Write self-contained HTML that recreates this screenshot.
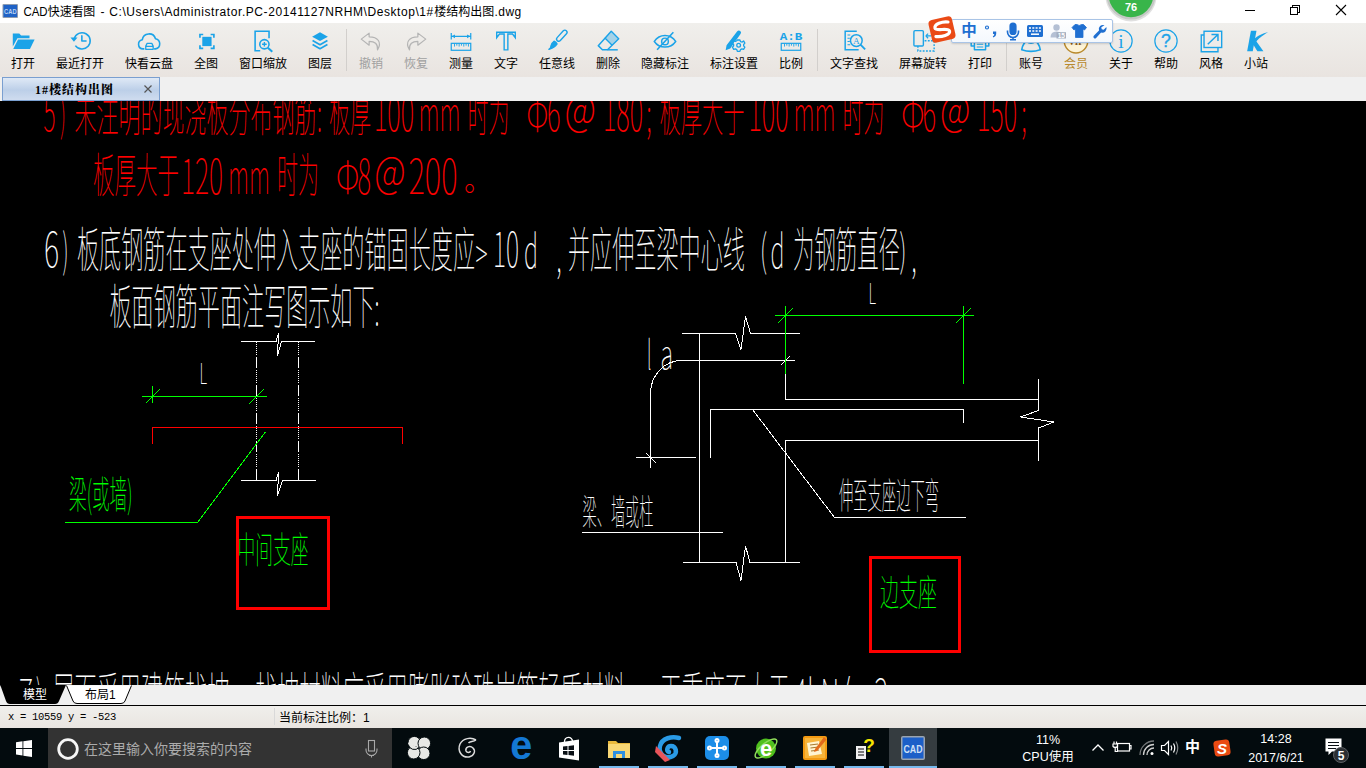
<!DOCTYPE html>
<html lang="zh-CN">
<head>
<meta charset="utf-8">
<title>CAD快速看图</title>
<style>
*{box-sizing:border-box;margin:0;padding:0}
html,body{width:1366px;height:768px;overflow:hidden;background:#000}
body{position:relative;font-family:"Liberation Sans","Noto Sans CJK SC",sans-serif;font-size:12px;color:#000}
.abs{position:absolute}
#titlebar{left:0;top:0;width:1366px;height:23px;background:#fff}
#title text{font-family:"Liberation Sans","Noto Sans CJK SC",sans-serif}
#toolbar{left:0;top:23px;width:1366px;height:54px;background:linear-gradient(#f0efec,#e9e4e0)}
.tb{position:absolute;top:0;height:53px;width:80px;margin-left:-40px;text-align:center}
.tb svg{position:absolute;left:27px;top:5px;width:26px;height:26px;overflow:visible}
.tb span{position:absolute;left:0;right:0;top:33px;font-size:12px;line-height:16px;white-space:nowrap;color:#000}
.tb.dis span{color:#a0a0a0}
.tb.vip span{color:#b8892c}
.sep{position:absolute;top:6px;width:1px;height:42px;background:#d2cfcc}
#tabstrip{left:0;top:77px;width:1366px;height:24px;background:#f0f0f0}
#tab{left:2px;top:0;width:158px;height:24px;border:1px solid #7a9fd0;background:linear-gradient(#dfe9f6,#bccfe8 55%,#cfdcef)}
#tab b{position:absolute;left:32px;top:4px;font-family:"Liberation Serif","Noto Serif CJK SC",serif;font-weight:900;font-size:12px;line-height:16px;white-space:nowrap;letter-spacing:1px}
#canvas{left:0;top:101px;width:1366px;height:584px;background:#000;overflow:hidden}
.c{font-family:"Noto Sans CJK SC",sans-serif;font-weight:100}
#layout{left:0;top:685px;width:1366px;height:21px;background:#f0f0f0;border-bottom:1px solid #000}
#status{left:0;top:706px;width:1366px;height:22px;background:linear-gradient(#f0efec,#e9e5e1)}
#taskbar{left:0;top:728px;width:1366px;height:40px;background:#030b0e}
.ul{top:38px;height:2px;background:#76b9ed}
.tt{color:#fff;font-size:12.500px;line-height:16px;text-align:center;white-space:nowrap}
</style>
</head>
<body>
<div id="titlebar" class="abs">
<svg class="abs" style="left:2px;top:4px" width="16" height="14" viewBox="0 0 16 14"><rect x=".5" y="0" width="15.500" height="14" rx="1" fill="#8e9cb0"/><rect x="1.500" y="1" width="13.500" height="12" fill="#1f62c6"/><text x="8.300" y="10.200" text-anchor="middle" font-family="Liberation Sans,sans-serif" font-weight="bold" font-size="8" fill="#b9d2f2" textLength="12.500" lengthAdjust="spacingAndGlyphs">CAD</text></svg>
<svg id="title" class="abs" style="left:0;top:0" width="540" height="23" viewBox="0 0 540 23" font-size="12" fill="#000"><text x="23.400" y="16" textLength="24.200" lengthAdjust="spacingAndGlyphs">CAD</text><text x="47.800" y="16" textLength="47.500">快速看图</text><text x="100.600" y="16">-</text><text x="109.300" y="16" textLength="324" lengthAdjust="spacing">C:\Users\Administrator.PC-20141127NRHM\Desktop\1#</text><text x="434.200" y="16" textLength="60">楼结构出图</text><text x="494.500" y="16" textLength="26.800" lengthAdjust="spacing">.dwg</text></svg>
<svg class="abs" style="left:1230px;top:0" width="136" height="23" viewBox="1230 0 136 23" fill="none" stroke="#000" stroke-width="1" shape-rendering="crispEdges"><path d="M1245 10.500H1255"/><path d="M1290.500 7.500H1297.500V14.500H1290.500zM1292.500 7.500V5.500H1299.500V12.500H1297.500"/><path d="M1336 5L1346 15M1346 5L1336 15" shape-rendering="auto" stroke-width="1.100"/></svg>
</div>
<div id="toolbar" class="abs">
<div class="tb " style="left:23px"><svg viewBox="0 0 28 28"><path d="M3 6h7l2 2h9v3H8l-5 9z" fill="#1ba3e8"/><path d="M8.600 12.500H26.500L21.500 22.500H3.500z" fill="#1ba3e8"/></svg><span>打开</span></div>
<div class="tb " style="left:80px"><svg viewBox="0 0 28 28"><g transform="translate(1.500 -1)"><g fill="none" stroke="#1ba3e8" stroke-width="1.7"><path d="M6.200 12.500A8.800 8.800 0 1 1 7.500 20"/><path d="M14.500 9.500V15H19" stroke-linecap="round" stroke-linejoin="round"/></g><path d="M2.200 11.200L9.800 11.200L6 15.800z" fill="#1ba3e8"/></g></svg><span>最近打开</span></div>
<div class="tb " style="left:149px"><svg viewBox="0 0 28 28"><g fill="none" stroke="#1ba3e8" stroke-width="1.7" stroke-linejoin="round"><path d="M9 22.500H7.500A5 5 0 0 1 6.800 12.600A7.300 7.300 0 0 1 21 11.500A5.600 5.600 0 0 1 21 22.500H19.500"/><path d="M10.500 23V19.500L12 16.500H17L18.500 19.500V23zM10.500 19.800H18.500" stroke-width="1.4"/></g></svg><span>快看云盘</span></div>
<div class="tb " style="left:206px"><svg viewBox="0 0 28 28"><g transform="translate(1 0.500)"><rect x="9" y="9" width="10" height="10" fill="#1ba3e8"/><g fill="none" stroke="#1ba3e8" stroke-width="1.800"><path d="M6.500 10V6.500H10M18 6.500H21.500V10M21.500 18V21.500H18M10 21.500H6.500V18"/></g></g></svg><span>全图</span></div>
<div class="tb " style="left:263px"><svg viewBox="0 0 28 28"><g fill="none" stroke="#1ba3e8" stroke-width="1.7"><path d="M20.500 11V3.500H5.500V24.500H11"/><circle cx="15.500" cy="17.500" r="5"/><path d="M19.200 21.200L24 25.500" stroke-width="2.200"/><path d="M13 17.500H18M15.500 15V20" stroke-width="1.500"/></g></svg><span>窗口缩放</span></div>
<div class="tb " style="left:320px"><svg viewBox="0 0 28 28"><path d="M14 4.500L22.500 9.300L14 14L5.500 9.300z" fill="#1ba3e8"/><g fill="none" stroke="#1ba3e8" stroke-width="1.800" stroke-linejoin="round"><path d="M6 13.500L14 18L22 13.500"/><path d="M6 17.800L14 22.300L22 17.800"/></g></svg><span>图层</span></div>
<div class="tb dis" style="left:371px"><svg viewBox="0 0 28 28"><path d="M12 5.500L3.500 12L12 18.500V14.500C18 14.500 21.500 16.500 21 23.500C26 15.500 21.500 9.500 12 9.500z" fill="none" stroke="#b4b4b4" stroke-width="1.300" stroke-linejoin="round"/></svg><span>撤销</span></div>
<div class="tb dis" style="left:416px"><svg viewBox="0 0 28 28"><path d="M16 5.500L24.500 12L16 18.500V14.500C10 14.500 6.500 16.500 7 23.500C2 15.500 6.500 9.500 16 9.500z" fill="none" stroke="#b4b4b4" stroke-width="1.300" stroke-linejoin="round"/></svg><span>恢复</span></div>
<div class="tb " style="left:461px"><svg viewBox="0 0 28 28"><g fill="none" stroke="#1ba3e8" stroke-width="1.300"><path d="M3.500 5.500V12.500M24.500 5.500V12.500M4 9H24"/><rect x="3.500" y="16.500" width="21" height="7.500"/><path d="M7 17V20M9.500 17V19M12 17V20M14.500 17V19M17 17V20M19.500 17V19M22 17V20" stroke-width="1"/></g><path d="M4 9L7.500 7V11zM24 9L20.500 7V11z" fill="#1ba3e8"/></svg><span>测量</span></div>
<div class="tb " style="left:506px"><svg viewBox="0 0 28 28"><path d="M4 4.500H24V10.500L21 6.500H16V23.500H12V6.500H7L4 10.500z" fill="none" stroke="#1ba3e8" stroke-width="1.500" stroke-linejoin="miter"/></svg><span>文字</span></div>
<div class="tb " style="left:557px"><svg viewBox="0 0 28 28"><g transform="rotate(42 14 14)" fill="none" stroke="#1ba3e8" stroke-width="1.500" stroke-linejoin="round"><rect x="11.700" y="-1" width="4.600" height="14.500" rx="2.300"/><path d="M11.800 16.300Q14 15.300 16.200 16.300Q17 21.500 13.600 26.500Q14.300 23.500 12.800 22.500Q11 20 11.800 16.300z" fill="#1ba3e8"/></g></svg><span>任意线</span></div>
<div class="tb " style="left:608px"><svg viewBox="0 0 28 28"><g fill="none" stroke="#1ba3e8" stroke-width="1.600" stroke-linejoin="round"><path d="M17.500 3.500L25.500 11.500L13.500 23.500H8L3.500 19z"/><path d="M10.500 10.500L18.500 18.500"/><path d="M13.500 23.500H24.500"/></g><path d="M17.500 4.500L24.500 11.500L18.500 17.500L11.500 10.500z" fill="#1ba3e8" opacity=".35"/></svg><span>删除</span></div>
<div class="tb " style="left:665px"><svg viewBox="0 0 28 28"><g fill="none" stroke="#1ba3e8" stroke-width="1.600"><path d="M2.500 14.500C8 6 20 6 25.500 14.500C20 22.500 8 22.500 2.500 14.500z"/><circle cx="14" cy="14.500" r="3.600"/><path d="M5.500 23.500L23 4.500" stroke-width="1.700"/></g></svg><span>隐藏标注</span></div>
<div class="tb " style="left:734px"><svg viewBox="0 0 28 28"><path d="M17.500 3.500a2.300 2.300 0 0 1 3.500 3L10 22L5 24L6 18.500z" fill="#1ba3e8"/><circle cx="19" cy="18.500" r="5.800" fill="#eeebe9"/><g fill="none" stroke="#1ba3e8" stroke-width="1.400"><circle cx="19" cy="18.500" r="2"/><path d="M17.600 12.900H20.400L21 14.700L22.900 15.100L24.300 13.900L25.700 16.300L24.400 17.700V19.300L25.700 20.700L24.300 23.100L22.500 22.500L21 23.300L20.400 25.100H17.600L17 23.300L15.500 22.500L13.700 23.100L12.300 20.700L13.600 19.300V17.700L12.300 16.300L13.700 13.900L15.500 14.500L17 13.700z" stroke-linejoin="round"/></g></svg><span>标注设置</span></div>
<div class="tb " style="left:791px"><svg viewBox="0 0 28 28"><g fill="none" stroke="#1ba3e8" stroke-width="1.300"><rect x="3.500" y="16.500" width="21" height="7.500"/><path d="M7 17V20M9.500 17V19M12 17V20M14.500 17V19M17 17V20M19.500 17V19M22 17V20" stroke-width="1"/></g><text x="14" y="12.500" text-anchor="middle" font-family="Liberation Mono,monospace" font-weight="bold" font-size="11.500" fill="#1ba3e8" textLength="24.500" lengthAdjust="spacingAndGlyphs">A:B</text></svg><span>比例</span></div>
<div class="tb " style="left:854px"><svg viewBox="0 0 28 28"><g fill="none" stroke="#1ba3e8" stroke-width="1.600"><path d="M17 3.500H4.500V23.500H19"/><path d="M7 7.500H10M7 11H9.500M7 14.500H9.500M7 18H10" stroke-width="1.100"/><circle cx="16.500" cy="13.500" r="6.300"/><path d="M21 18L26 23" stroke-width="2"/></g><text x="16.500" y="17" text-anchor="middle" font-family="Liberation Serif,serif" font-size="10" fill="#1ba3e8">A</text></svg><span>文字查找</span></div>
<div class="tb " style="left:923px"><svg viewBox="0 0 28 28"><g fill="none" stroke="#1ba3e8" stroke-width="1.500"><rect x="4.200" y="2.800" width="10.200" height="16.600" rx="1.200"/><path d="M8.500 19.400V24.700H26V13.800H14.400" stroke-dasharray="2 1.500"/><path d="M17 8.500H23M17 8.500L19.500 6M17 8.500L19.500 11" stroke-width="1.300"/></g></svg><span>屏幕旋转</span></div>
<div class="tb " style="left:980px"><svg viewBox="0 0 28 28"><g fill="none" stroke="#1ba3e8" stroke-width="1.600" stroke-linejoin="round"><path d="M8 9V3.500H20V9"/><path d="M8 19.500H4.500V9H23.500V19.500H20"/><rect x="8" y="14.500" width="12" height="9"/><path d="M10.500 17.500H17.500M10.500 20.500H17.500" stroke-width="1.200"/></g></svg><span>打印</span></div>
<div class="tb " style="left:1031px"><svg viewBox="0 0 28 28"><g fill="none" stroke="#1ba3e8" stroke-width="1.800"><circle cx="14" cy="8" r="5"/><path d="M4 23.500C5 17 8 14.500 9.500 14.500C12 17 16 17 18.500 14.500C20 14.500 23 17 24 23.500C18 25.500 10 25.500 4 23.500z" stroke-linejoin="round"/></g></svg><span>账号</span></div>
<div class="tb vip" style="left:1076px"><svg viewBox="0 0 28 28"><circle cx="14" cy="14.300" r="12.600" fill="#fdf3d6" stroke="#b8892c" stroke-width="1.500"/><text x="14" y="18" text-anchor="middle" font-family="Liberation Serif,serif" font-weight="bold" font-size="9.500" fill="#8a5a14">VIP</text></svg><span>会员</span></div>
<div class="tb " style="left:1121px"><svg viewBox="0 0 28 28"><circle cx="14" cy="14" r="12" fill="none" stroke="#1ba3e8" stroke-width="1.300"/><text x="14" y="21" text-anchor="middle" font-family="Liberation Serif,serif" font-size="21" fill="#1ba3e8">i</text></svg><span>关于</span></div>
<div class="tb " style="left:1166px"><svg viewBox="0 0 28 28"><circle cx="14" cy="14" r="12" fill="none" stroke="#1ba3e8" stroke-width="1.300"/><text x="14" y="20.500" text-anchor="middle" font-family="Liberation Sans,sans-serif" font-size="19" fill="#1ba3e8" stroke="#1ba3e8" stroke-width=".4">?</text></svg><span>帮助</span></div>
<div class="tb " style="left:1211px"><svg viewBox="0 0 28 28"><g fill="none" stroke="#1ba3e8" stroke-width="1.500"><path d="M21.500 20V25.500H3.500V7.500H9"/><rect x="6.500" y="3.500" width="19" height="17.500" fill="#eeebe9"/><path d="M10.500 17.500L21.500 7M14.500 7H21.500V14" stroke-width="1.600"/></g></svg><span>风格</span></div>
<div class="tb " style="left:1256px"><svg viewBox="0 0 28 28"><path d="M8.500 3H14.500L10.500 25H4.500z" fill="#1ba3e8"/><path d="M9 15C14 9 20 6 27 4.500C20 8.500 16 12 14.500 14.500L22 25H15.500L10.500 17z" fill="#1ba3e8"/></svg><span>小站</span></div>
<div class="sep" style="left:346px"></div>
<div class="sep" style="left:817px"></div>
<div class="sep" style="left:1006px"></div>
</div>
<div id="tabstrip" class="abs"><div id="tab" class="abs"><b>1#楼结构出图</b><svg class="abs" style="left:139px;top:5px" width="12" height="12" viewBox="0 0 12 12"><path d="M2.500 2.500L9.500 9.500M9.500 2.500L2.500 9.500" stroke="#555" stroke-width="1.200" fill="none"/></svg></div></div>
<div id="canvas" class="abs">
<svg class="abs" style="left:0;top:0" width="1366" height="584" viewBox="0 101 1366 584" shape-rendering="crispEdges">
<g class="c" fill="#f00" stroke="#f00" stroke-width="0.12">
<text x="43.5" y="131.300" font-size="48" textLength="12" lengthAdjust="spacingAndGlyphs">5</text>
<text x="60" y="131" font-size="46" textLength="6" lengthAdjust="spacingAndGlyphs">)</text>
<text x="74.5" y="130.500" font-size="47" textLength="242" lengthAdjust="spacingAndGlyphs">未注明的现浇板分布钢筋</text>
<text x="317" y="130.500" font-size="47" textLength="5" lengthAdjust="spacingAndGlyphs">:</text>
<text x="329" y="130.500" font-size="47" textLength="42" lengthAdjust="spacingAndGlyphs">板厚</text>
<text x="374" y="131.300" font-size="48" textLength="40" lengthAdjust="spacingAndGlyphs">100</text>
<text x="418.5" y="131.300" font-size="48" textLength="42" lengthAdjust="spacingAndGlyphs">mm</text>
<text x="467.5" y="130.500" font-size="47" textLength="42" lengthAdjust="spacingAndGlyphs">时为</text>
<text x="526.400" y="131" font-size="44" textLength="21.700" lengthAdjust="spacingAndGlyphs">Φ</text>
<text x="547" y="131.300" font-size="48" textLength="13.5" lengthAdjust="spacingAndGlyphs">6</text>
<text x="564.500" y="125.800" font-size="45" textLength="31.400" lengthAdjust="spacingAndGlyphs">@</text>
<text x="603" y="131.300" font-size="48" textLength="40" lengthAdjust="spacingAndGlyphs">180</text>
<text x="646.5" y="131.300" font-size="48" textLength="5" lengthAdjust="spacingAndGlyphs">;</text>
<text x="659.5" y="130.500" font-size="47" textLength="85" lengthAdjust="spacingAndGlyphs">板厚大于</text>
<text x="748.5" y="131.300" font-size="48" textLength="40" lengthAdjust="spacingAndGlyphs">100</text>
<text x="793.5" y="131.300" font-size="48" textLength="42" lengthAdjust="spacingAndGlyphs">mm</text>
<text x="842.5" y="130.500" font-size="47" textLength="42" lengthAdjust="spacingAndGlyphs">时为</text>
<text x="901.200" y="131" font-size="44" textLength="23.200" lengthAdjust="spacingAndGlyphs">Φ</text>
<text x="922.5" y="131.300" font-size="48" textLength="13.5" lengthAdjust="spacingAndGlyphs">6</text>
<text x="939.900" y="125.800" font-size="45" textLength="30.300" lengthAdjust="spacingAndGlyphs">@</text>
<text x="977" y="131.300" font-size="48" textLength="40" lengthAdjust="spacingAndGlyphs">150</text>
<text x="1021.5" y="131.300" font-size="48" textLength="5" lengthAdjust="spacingAndGlyphs">;</text>
<text x="93" y="192.300" font-size="47" textLength="86" lengthAdjust="spacingAndGlyphs">板厚大于</text>
<text x="181" y="193.5" font-size="48" textLength="42" lengthAdjust="spacingAndGlyphs">120</text>
<text x="228" y="193.5" font-size="48" textLength="42" lengthAdjust="spacingAndGlyphs">mm</text>
<text x="277" y="192.300" font-size="47" textLength="42" lengthAdjust="spacingAndGlyphs">时为</text>
<text x="335.900" y="193" font-size="44" textLength="23.200" lengthAdjust="spacingAndGlyphs">Φ</text>
<text x="357.5" y="193.5" font-size="48" textLength="13.5" lengthAdjust="spacingAndGlyphs">8</text>
<text x="374.200" y="188" font-size="45" textLength="31.400" lengthAdjust="spacingAndGlyphs">@</text>
<text x="408.5" y="193.5" font-size="48" textLength="49" lengthAdjust="spacingAndGlyphs">200</text>
<text x="464.100" y="191.400" font-size="31" textLength="28.500" lengthAdjust="spacingAndGlyphs">。</text>
</g>
<g class="c" fill="#fff" stroke="#fff" stroke-width="0.08">
<text x="44" y="267" font-size="48" textLength="15" lengthAdjust="spacingAndGlyphs">6</text>
<text x="62.5" y="267" font-size="46" textLength="6" lengthAdjust="spacingAndGlyphs">)</text>
<text x="77" y="266.600" font-size="48" textLength="398" lengthAdjust="spacingAndGlyphs">板底钢筋在支座处伸入支座的锚固长度应</text>
<text x="475.5" y="268.5" font-size="40" textLength="12" lengthAdjust="spacingAndGlyphs">&gt;</text>
<text x="493" y="267" font-size="48" textLength="26" lengthAdjust="spacingAndGlyphs">10</text>
<text x="524" y="267.5" font-size="46" textLength="14" lengthAdjust="spacingAndGlyphs">d</text>
<text x="556.5" y="270.5" font-size="46" textLength="5" lengthAdjust="spacingAndGlyphs">,</text>
<text x="568" y="266.600" font-size="48" textLength="177" lengthAdjust="spacingAndGlyphs">并应伸至梁中心线</text>
<text x="760" y="266" font-size="44" textLength="7" lengthAdjust="spacingAndGlyphs">(</text>
<text x="770.5" y="267.5" font-size="46" textLength="14" lengthAdjust="spacingAndGlyphs">d</text>
<text x="793" y="266.600" font-size="48" textLength="107" lengthAdjust="spacingAndGlyphs">为钢筋直径</text>
<text x="899.5" y="266" font-size="44" textLength="7" lengthAdjust="spacingAndGlyphs">)</text>
<text x="911.5" y="270.5" font-size="46" textLength="5" lengthAdjust="spacingAndGlyphs">,</text>
<text x="109.500" y="323.500" font-size="48" textLength="265" lengthAdjust="spacingAndGlyphs">板面钢筋平面注写图示如下</text>
<text x="374.500" y="324.500" font-size="46" textLength="5" lengthAdjust="spacingAndGlyphs">:</text>
<text x="199.5" y="384" font-size="29" textLength="7.5" lengthAdjust="spacingAndGlyphs">L</text>
<text x="868.5" y="304" font-size="29" textLength="7.5" lengthAdjust="spacingAndGlyphs">L</text>
<text x="647" y="368.500" font-size="40" textLength="4.500" lengthAdjust="spacingAndGlyphs">l</text>
<text x="660.500" y="368.500" font-size="40" textLength="12.500" lengthAdjust="spacingAndGlyphs">a</text>
<text x="582.5" y="525" font-size="35" textLength="71" lengthAdjust="spacingAndGlyphs">梁、墙或柱</text>
<text x="839" y="508.500" font-size="36.500" textLength="100" lengthAdjust="spacingAndGlyphs">伸至支座边下弯</text>
<text x="19" y="713.500" font-size="48" textLength="14" lengthAdjust="spacingAndGlyphs">7</text>
<text x="36" y="713" font-size="46" textLength="6" lengthAdjust="spacingAndGlyphs">)</text>
<text x="52.5" y="712.100" font-size="48" textLength="177" lengthAdjust="spacingAndGlyphs">屋面采用建筑找坡</text>
<text x="230" y="716" font-size="46" textLength="5" lengthAdjust="spacingAndGlyphs">,</text>
<text x="255.500" y="712.100" font-size="48" textLength="370" lengthAdjust="spacingAndGlyphs">找坡材料应采用膨胀珍珠岩等轻质材料</text>
<text x="630" y="716" font-size="46" textLength="5" lengthAdjust="spacingAndGlyphs">,</text>
<text x="660" y="712.100" font-size="48" textLength="130" lengthAdjust="spacingAndGlyphs">干重度不大于</text>
<text x="793" y="713.500" font-size="48" textLength="95" lengthAdjust="spacingAndGlyphs">4kN/m3</text>
</g>
<g class="c" fill="#0f0" stroke="#0f0" stroke-width="0.12">
<text x="69" y="508" font-size="37.500" textLength="63.500" lengthAdjust="spacingAndGlyphs">梁(或墙)</text>
<text x="237.500" y="562.800" font-size="36" textLength="71" lengthAdjust="spacingAndGlyphs">中间支座</text>
<text x="880" y="606.300" font-size="36" textLength="57" lengthAdjust="spacingAndGlyphs">边支座</text>
</g>
<g fill="none" stroke="#fff" stroke-width="1">
<path d="M240.5 341.5H276L278.5 333.5L277.5 355.5L281.5 341.5H315"/>
<path d="M240.5 480.5H276L278.5 472.5L277.5 495.5L282.5 480.5H316"/>
<path d="M256.5 341.5V480.5M298.5 341.5V480.5" stroke-dasharray="1 1 1 1 1 1 1 1 1 1 1 1 1 2 11 2"/>
<path d="M682 333.5H735.5L741 349.5L745.5 316.5L750.5 333.5H800"/>
<path d="M682.5 562.5H736L741 580.5L745.5 546L750 562.5H800"/>
<path d="M699.5 333.5V562.5"/>
<path d="M795 360.5H681.5A31 33 0 0 0 650.5 393.5V467.5"/>
<path d="M635.5 457.5H696M646 453L656 463"/>
<path d="M781 365L790 356"/>
<path d="M785.5 373.5V399.5H1038.5"/>
<path d="M710.5 457.5V409.5H963.5V423"/>
<path d="M785.5 562.5V440.5H1038.5"/>
<path d="M1038.5 379V410.5L1020.5 417L1054 422L1038.5 428V460.5"/>
<path d="M752.5 409.5L834.5 517.5H966"/>
<path d="M581.5 532.5H722.5"/>
</g>
<g fill="none" stroke="#0f0" stroke-width="1">
<path d="M142 396.500H267M152.500 386V403M146 403L160 389M249 404L264 389"/>
<path d="M265.500 432L197.500 522.500H65"/>
<path d="M775 315.500H974M785.500 306V373.500M963.500 305.500V383.500M778 323L793 308M956 323L970.500 308.500"/>
</g>
<path d="M152.500 443.500V427.500H402.500V443.500" fill="none" stroke="#f00" stroke-width="1"/>
<rect x="237.500" y="517.500" width="91" height="91" fill="none" stroke="#f00" stroke-width="3"/>
<rect x="870.500" y="557.500" width="88.500" height="94" fill="none" stroke="#f00" stroke-width="3"/>
</svg>
</div>
<div id="layout" class="abs">
<svg class="abs" style="left:0;top:0" width="140" height="20" viewBox="0 0 140 20"><path d="M0 0H66L59 16Q58 19 55 19H10Q7 19 6 16L1 2z" fill="#000"/><path d="M66.500 0.500L73 16Q74 18.500 77 18.500H121Q124 18.500 125 16L131.500 0.500" fill="#fff" stroke="#000" stroke-width="1"/></svg>
<span class="abs" style="left:23px;top:2px;color:#fff;font-size:12px;line-height:16px">模型</span>
<span class="abs" style="left:85px;top:2px;color:#000;font-size:12px;line-height:16px">布局1</span>
</div>
<div id="status" class="abs">
<span class="abs" style="left:8px;top:4px;font-family:'Liberation Mono',monospace;font-size:10.500px;line-height:14px;white-space:pre;letter-spacing:-0.300px">x = 10559 y = -523</span>
<div class="abs" style="left:274px;top:2px;width:1px;height:17px;background:#d9d9d9"></div>
<span class="abs" style="left:279px;top:4px;font-size:12px;line-height:16px;white-space:pre">当前标注比例：1</span>
</div>
<div id="taskbar" class="abs">

<svg class="abs" style="left:16px;top:12px" width="16" height="17" viewBox="0 0 17 17" preserveAspectRatio="none"><path d="M0 2.300L6.900 1.300V8H0zM7.800 1.200L17 0V8H7.800zM0 8.900H6.900V15.600L0 14.600zM7.800 8.900H17V17L7.800 15.700z" fill="#fff"/></svg>
<div class="abs" style="left:48px;top:0;width:344px;height:40px;background:#333"></div>
<svg class="abs" style="left:56px;top:9px" width="24" height="24" viewBox="0 0 24 24"><circle cx="12" cy="12" r="9.300" fill="none" stroke="#f6f6f6" stroke-width="2.800"/></svg>
<span class="abs" style="left:84px;top:12px;font-size:14px;line-height:18px;color:#ababab;white-space:nowrap">在这里输入你要搜索的内容</span>
<svg class="abs" style="left:363px;top:10px" width="17" height="22" viewBox="0 0 17 22" fill="none" stroke="#a8a8a8" stroke-width="1.100"><rect x="5.500" y="2.500" width="6" height="10.500"/><path d="M3 10.500V12A5.500 5.500 0 0 0 14 12V10.500M8.500 17.500V19.500M6 17.500H11"/></svg>
<!-- pinned icons -->
<svg class="abs" style="left:404px;top:5px" width="30" height="30" viewBox="0 0 30 30"><g fill="#e8e9e6" stroke="#030b0e" stroke-width="1"><circle cx="10.300" cy="9.700" r="6.300"/><circle cx="20.300" cy="10.300" r="6.300"/><circle cx="19.700" cy="20.300" r="6.300"/><circle cx="9.700" cy="19.700" r="6.300"/><path d="M4 9.700A6.300 6.300 0 0 0 16.600 9.700L15 15z" stroke="none"/><path d="M4.200 11.500A6.300 6.300 0 0 0 15 14.500" fill="none"/></g></svg>
<svg class="abs" style="left:453px;top:5px" width="30" height="30" viewBox="0 0 30 30" fill="none" stroke="#dcdcdc" stroke-width="1.500"><path d="M23 7C18 4 10 5 7 11C4 18 9 25 16 24C21 23 23 18 20 15C17 12 12 14 13 18C14 20 17 20 17.500 18"/><path d="M23 7C20 9 17 8 15.500 10"/></svg>
<svg class="abs" style="left:506px;top:5px" width="30" height="30" viewBox="0 0 30 30"><text x="15.300" y="26" text-anchor="middle" font-family="Liberation Sans,sans-serif" font-weight="bold" font-size="40" fill="#1478d4" textLength="22" lengthAdjust="spacingAndGlyphs">e</text></svg>
<svg class="abs" style="left:555px;top:5px" width="30" height="30" viewBox="0 0 30 30"><path d="M9.500 9C9.500 3 17.500 3 17.500 8.500" fill="none" stroke="#fff" stroke-width="1.300"/><path d="M4 9.500L24 6.500V27.500L4 24.500z" fill="#fff"/><path d="M8 13.500L12.500 13V17H8zM13.500 12.900L19 12.300V17H13.500zM8 18H12.500V22L8 21.500zM13.500 18H19V22.700L13.500 22.100z" fill="#0a1015"/></svg>
<svg class="abs" style="left:604px;top:5px" width="30" height="30" viewBox="0 0 30 30"><path d="M4 8H12L14 10H26V25H4z" fill="#e9b93c"/><path d="M4 11H26V25H4z" fill="#f8d775"/><path d="M9 18H21V25H9z" fill="#2f8fe0"/><path d="M12 21H18V25H12z" fill="#f8d775"/></svg>
<svg class="abs" style="left:653px;top:5px" width="30" height="30" viewBox="0 0 30 30"><path d="M26 5C19 3 9 5 7 13C5 21 13 27 20 23C25 20 23 13 18 13C14 13 13 18 16 19" fill="none" stroke="#2a9be6" stroke-width="4.500" stroke-linecap="round"/><path d="M3 13L17 27L12 29L2 19z" fill="#e8545a"/></svg>
<svg class="abs" style="left:702px;top:5px" width="30" height="30" viewBox="0 0 30 30"><rect x="3" y="3" width="24" height="24" rx="5" fill="#1c8ee8"/><g fill="none" stroke="#fff" stroke-width="2"><path d="M15 8V22M8 15H22"/><circle cx="15" cy="7.500" r="1.500"/><circle cx="15" cy="22.500" r="1.500"/><circle cx="7.500" cy="15" r="1.500"/><circle cx="22.500" cy="15" r="1.500"/></g></svg>
<svg class="abs" style="left:751px;top:5px" width="30" height="30" viewBox="0 0 30 30"><circle cx="15" cy="15.500" r="10" fill="#4fc01e"/><ellipse cx="15" cy="15.500" rx="13.500" ry="5" fill="none" stroke="#8fdc5a" stroke-width="1.500" transform="rotate(-40 15 15.500)"/><text x="15" y="23" text-anchor="middle" font-family="Liberation Sans,sans-serif" font-weight="bold" font-size="22" fill="#fff">e</text></svg>
<svg class="abs" style="left:800px;top:5px" width="30" height="30" viewBox="0 0 30 30"><rect x="3" y="3" width="24" height="24" rx="2" fill="#f39a12"/><rect x="5" y="5" width="20" height="20" fill="#f7b43a"/><path d="M7 10L19 8L22 21L9 23z" fill="#fff4d0"/><path d="M10 12L18 11M10.500 15L18.500 14M11 18L19 17" stroke="#a87a30" stroke-width="1.200"/><path d="M24 4L26.500 6.500L17 18L14 19L15 16z" fill="#e36a1a"/></svg>
<svg class="abs" style="left:849px;top:5px" width="30" height="30" viewBox="0 0 30 30"><path d="M7 13H17V26H7z" fill="#f1f1f1"/><path d="M9 16H15M9 19H15M9 22H15" stroke="#555" stroke-width="1.300"/><text x="20" y="19" text-anchor="middle" font-family="Liberation Sans,sans-serif" font-weight="bold" font-size="19" fill="#f5e400">?</text></svg>
<div class="abs" style="left:889px;top:0;width:48px;height:40px;background:#353c40"></div>
<svg class="abs" style="left:898px;top:5px" width="30" height="30" viewBox="0 0 30 30"><rect x="3" y="3" width="24" height="24" rx="2" fill="#9aa4b0"/><rect x="4.500" y="4.500" width="21" height="21" fill="#1c5fc8"/><text x="15" y="19.500" text-anchor="middle" font-family="Liberation Sans,sans-serif" font-weight="bold" font-size="11" fill="#cfe0f6" textLength="19" lengthAdjust="spacingAndGlyphs">CAD</text></svg>
<div class="abs ul" style="left:599px;width:40px"></div><div class="abs ul" style="left:648px;width:40px"></div><div class="abs ul" style="left:697px;width:40px"></div><div class="abs ul" style="left:746px;width:40px"></div><div class="abs ul" style="left:795px;width:40px"></div><div class="abs ul" style="left:844px;width:40px"></div><div class="abs ul" style="left:889px;width:48px"></div>
<!-- tray -->
<div class="abs tt" style="left:1008px;top:4px;width:80px">11%</div>
<div class="abs tt" style="left:1008px;top:21px;width:80px">CPU使用</div>
<svg class="abs" style="left:1090px;top:12px" width="16" height="16" viewBox="0 0 16 16"><path d="M2.500 10.500L8 5L13.500 10.500" fill="none" stroke="#fff" stroke-width="1.300"/></svg>
<svg class="abs" style="left:1112px;top:11px" width="20" height="16" viewBox="0 0 20 16" fill="none" stroke="#fff" stroke-width="1.200"><rect x="5.500" y="4.500" width="12" height="7.500"/><path d="M17.500 6.500H19V10H17.500" /><path d="M2 2.500V5M4.500 2.500V5M1 5H5.500V7.500Q3.200 9.500 1 7.500zM3.200 9V12.500H6" /></svg>
<svg class="abs" style="left:1138px;top:11px" width="18" height="18" viewBox="0 0 18 18" fill="none" stroke="#cfcfcf" stroke-width="1.300"><path d="M2 16A14 14 0 0 1 16 2" opacity=".55"/><path d="M5.500 16A10.500 10.500 0 0 1 16 5.500"/><path d="M9 16A7 7 0 0 1 16 9"/><circle cx="14" cy="14.500" r="1.500" fill="#fff" stroke="none"/></svg>
<svg class="abs" style="left:1160px;top:11px" width="20" height="18" viewBox="0 0 20 18" fill="none" stroke="#fff" stroke-width="1.200"><path d="M1.500 6.500H4.500L8.500 2.500V15.500L4.500 11.500H1.500z"/><path d="M11 6.500Q12.500 9 11 11.500M13.500 4.500Q16 9 13.500 13.500"/><path d="M16 2.500Q19.500 9 16 15.500" opacity=".5"/></svg>
<span class="abs" style="left:1185px;top:10px;font-size:15px;line-height:18px;color:#fff;font-weight:bold">中</span>
<svg class="abs" style="left:1212px;top:10px" width="20" height="20" viewBox="0 0 20 20"><rect x="2" y="2" width="16" height="16" rx="3.500" fill="#ea4a12" transform="rotate(-8 10 10)"/><text x="10" y="15.500" text-anchor="middle" font-family="Liberation Sans,sans-serif" font-weight="bold" font-style="italic" font-size="15" fill="#fff">S</text></svg>
<div class="abs tt" style="left:1236px;top:3px;width:80px">14:28</div>
<div class="abs tt" style="left:1236px;top:22px;width:80px">2017/6/21</div>
<svg class="abs" style="left:1322px;top:8px" width="30" height="30" viewBox="0 0 30 30"><path d="M3.500 2.500H19.500V15.500H10L6.500 19V15.500H3.500z" fill="#fff"/><path d="M6 6.500H17M6 9.500H17M6 12.500H14" stroke="#0a1015" stroke-width="1.100"/><circle cx="19" cy="19" r="7.500" fill="#2b2f33" stroke="#5a5e62" stroke-width="1"/><text x="19" y="23.500" text-anchor="middle" font-family="Liberation Sans,sans-serif" font-weight="bold" font-size="12" fill="#fff">5</text></svg>
</div>
<div id="ime" class="abs" style="left:951px;top:19px;width:162px;height:24px;background:linear-gradient(#fff,#f4f8fd);border:1px solid #a9c4e6;border-radius:2px;box-shadow:0 1px 2px rgba(0,0,0,.15)"></div>
<svg class="abs" style="left:924px;top:12px" width="196" height="36" viewBox="924 12 196 36">
<g transform="rotate(-13 942 29.500)"><rect x="930" y="18" width="24" height="23" rx="4" fill="#ea4a16"/><path d="M949.500 23.500C944 21.500 935.500 22.500 935.500 26.500C935.500 30.500 949 28.500 949 32.800C949 36.500 940 37 934.500 35" fill="none" stroke="#fff" stroke-width="3.200" stroke-linecap="round"/></g>
<text x="969" y="36" text-anchor="middle" font-family="Liberation Sans,Noto Sans CJK SC,sans-serif" font-weight="bold" font-size="15.500" fill="#1f6fd1">中</text>
<circle cx="987" cy="27.500" r="1.500" fill="none" stroke="#1f6fd1" stroke-width="1.200"/><path d="M993 31.500h3.200v2.500q0 2.500-2.800 3.500l-.6-1.200q1.500-.6 1.500-2.300h-1.300z" fill="#1f6fd1"/>
<g fill="none" stroke="#1f6fd1" stroke-width="1.600"><rect x="1010.200" y="23.200" width="5.600" height="11" rx="2.800" fill="#1f6fd1"/><path d="M1007.500 30.500V32A5.500 5.500 0 0 0 1018.500 32V30.500M1013 37.500V39.500M1010 39.800H1016"/></g>
<rect x="1027" y="25" width="16" height="12" rx="1.500" fill="#1f6fd1"/><path d="M1029 28H1041M1029 31H1041" stroke="#fff" stroke-width="1.500" stroke-dasharray="2 1.300"/><path d="M1031 34.200H1039" stroke="#fff" stroke-width="1.500"/>
<g fill="#b4c0d4"><circle cx="1056.500" cy="27.500" r="3.200"/><path d="M1050.500 37.500Q1050.500 31.500 1056.500 31.500Q1062.500 31.500 1062.500 37.500z"/></g><rect x="1056.500" y="32.200" width="9.500" height="6.300" fill="#a3aebf"/><text x="1061.300" y="38" text-anchor="middle" font-family="Liberation Sans,sans-serif" font-weight="bold" font-size="6.500" fill="#fff">15</text>
<path d="M1075 24.500L1072 27.500L1074 30L1075.500 29V37.500H1083V29L1084.500 30L1086.500 27.500L1083.500 24.500H1081.500Q1079.200 26.500 1077 24.500z" fill="#1f6fd1" stroke="#1f6fd1" stroke-width=".8" stroke-linejoin="round"/>
<path d="M1104.500 25.200a4.200 4.200 0 0 0-5.500 5.200l-5.200 5.400a1.400 1.400 0 0 0 2.300 2.100l5-5.500a4.200 4.200 0 0 0 5.300-5.300l-2.700 2.600l-2-.5l-.4-1.900z" fill="#1f6fd1"/>
</svg>
<svg class="abs" style="left:1100px;top:0" width="64" height="26" viewBox="1100 0 64 26"><circle cx="1131" cy="-4" r="25.500" fill="#000" opacity=".12"/><circle cx="1131" cy="-5" r="24.500" fill="#c4c8c4"/><circle cx="1131" cy="-5" r="22.300" fill="#38b54a"/><text x="1131" y="11" text-anchor="middle" font-family="Liberation Sans,sans-serif" font-weight="bold" font-size="11" fill="#fff">76</text></svg>
</body>
</html>
